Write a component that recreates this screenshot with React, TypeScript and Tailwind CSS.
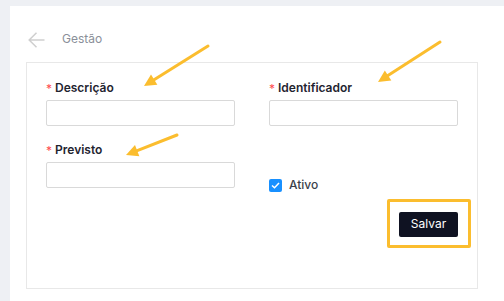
import React from 'react';

const font = { fontFamily: 'Inter, "Noto Sans", sans-serif' };

const Label: React.FC<{ text: string }> = ({ text }) => (
  <div className="flex items-center h-[16px] mb-[4px]">
    <span className="text-[#ff4d4f] text-[12px] mr-[3px] leading-none mt-[2px]">*</span>
    <span className="text-[12px] font-semibold text-[#1f2430]">{text}</span>
  </div>
);

const Input = () => (
  <input className="block w-[189px] h-[26px] border border-[#d9d9d9] rounded-[2px] bg-white outline-none" />
);

// yellow annotation arrows over the page
const Arrow: React.FC<{ x1: number; y1: number; x2: number; y2: number }> = ({ x1, y1, x2, y2 }) => {
  const dx = x2 - x1;
  const dy = y2 - y1;
  const len = Math.hypot(dx, dy);
  const ux = dx / len;
  const uy = dy / len;
  const bx = x2 - ux * 12;
  const by = y2 - uy * 12;
  const nx = -uy * 6;
  const ny = ux * 6;
  return (
    <g>
      <line x1={x1} y1={y1} x2={bx + ux * 2} y2={by + uy * 2} stroke="#fbbd2e" strokeWidth="3" strokeLinecap="round" />
      <polygon points={`${x2},${y2} ${bx + nx},${by + ny} ${bx - nx},${by - ny}`} fill="#fbbd2e" />
    </g>
  );
};

export default function App() {
  return (
    <div className="relative w-[504px] h-[301px] bg-[#eef0f4] pl-[10px] pt-[6px] overflow-hidden" style={font}>
      <div className="bg-white h-full pt-[26px] pl-[16px] pr-[26px]">
        <div className="flex items-center h-[16px] mb-[14px] pl-[2px]">
          <svg width="17" height="16" viewBox="0 0 17 16" fill="none" stroke="#cfcfcf" strokeWidth="1.5">
            <path d="M16.5 8H1.2M8.5 0.8L1.2 8l7.3 7.2" />
          </svg>
          <span className="ml-[17px] text-[12px] text-[#8a8f99] -mt-[3px]">Gestão</span>
        </div>

        <div className="border border-[#e8e8e8] h-[227px] pt-[17px] px-[19px]">
          <div className="grid grid-cols-[189px_189px] gap-x-[34px]">
            <div>
              <Label text="Descrição" />
              <Input />
            </div>
            <div>
              <Label text="Identificador" />
              <Input />
            </div>
            <div className="mt-[16px]">
              <Label text="Previsto" />
              <Input />
            </div>
            <div className="mt-[16px] pt-[35px]">
              <label className="flex items-center h-[16px]">
                <span className="w-[13px] h-[13px] rounded-[2px] bg-[#1890ff] flex items-center justify-center">
                  <svg width="9" height="7" viewBox="0 0 9 7" fill="none" stroke="white" strokeWidth="1.5">
                    <path d="M1 3.5l2.5 2.3L8 1" />
                  </svg>
                </span>
                <span className="ml-[7px] text-[12px] font-medium text-[#3a3f4a]">Ativo</span>
              </label>
            </div>
          </div>

          <div className="flex justify-end mt-[17px]">
            <div className="relative">
              <button className="w-[59px] h-[25px] bg-[#0f1222] text-white text-[12px] rounded-[2px]">Salvar</button>
              <span className="absolute -left-[12px] -right-[13px] -top-[11px] -bottom-[11px] border-[3px] border-[#fbbd2e] rounded-[2px] pointer-events-none" />
            </div>
          </div>
        </div>
      </div>

      <svg className="absolute inset-0 pointer-events-none" width="504" height="301">
        <Arrow x1={208} y1={46} x2={144} y2={86} />
        <Arrow x1={440} y1={42} x2={378} y2={82} />
        <Arrow x1={177} y1={135} x2={126} y2={155} />
      </svg>
    </div>
  );
}
